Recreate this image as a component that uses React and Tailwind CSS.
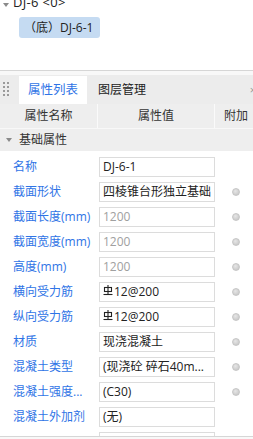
import React from "react";

const FONT = "font-['Open_Sans','Noto_Sans_CJK_SC',sans-serif]";

const rows = [
  { label: "名称", value: "DJ-6-1", dot: false },
  { label: "截面形状", value: "四棱锥台形独立基础", dot: true },
  { label: "截面长度(mm)", value: "1200", dot: true, muted: true },
  { label: "截面宽度(mm)", value: "1200", dot: true, muted: true },
  { label: "高度(mm)", value: "1200", dot: true, muted: true },
  { label: "横向受力筋", value: "12@200", dot: true, rebar: true },
  { label: "纵向受力筋", value: "12@200", dot: true, rebar: true },
  { label: "材质", value: "现浇混凝土", dot: true },
  { label: "混凝土类型", value: "(现浇砼 碎石40m...", dot: true },
  { label: "混凝土强度...", value: "(C30)", dot: true },
  { label: "混凝土外加剂", value: "(无)", dot: false },
];

const Rebar = () => (
  <svg width="10" height="11" viewBox="0 0 10 11" className="mr-[1px] -mt-[3px] shrink-0">
    <rect x="1.5" y="2.5" width="7" height="4" fill="none" stroke="#222" strokeWidth="1.1" />
    <line x1="5" y1="0" x2="5" y2="9.5" stroke="#222" strokeWidth="1.1" />
    <line x1="0.5" y1="9.5" x2="9.5" y2="9.5" stroke="#222" strokeWidth="1.1" />
  </svg>
);

const Caret = ({ className }) => (
  <svg width="6" height="4" viewBox="0 0 6 4" className={className}>
    <polygon points="0,0 6,0 3,4" fill="#8a8a8a" />
  </svg>
);

export default function App() {
  return (
    <div className={`w-[253px] h-[439px] overflow-hidden bg-white text-[12px] text-[#222] flex flex-col ${FONT}`}>
      {/* tree */}
      <div className="h-[70px] shrink-0 flex flex-col">
        <div className="flex items-center h-[16px] -mt-[6px] pl-[3px]">
          <Caret className="mr-[4px] mt-[5px]" />
          <span className="leading-[16px] text-[13px] tracking-[0.3px]">DJ-6 &lt;0&gt;</span>
        </div>
        <div className="mt-[7px] ml-[19px] w-[81px] h-[21px] rounded-[3px] bg-[#c5dbf2] flex items-center pl-[5px]">
          <span className="leading-[16px]">（底）DJ-6-1</span>
        </div>
      </div>

      {/* splitter */}
      <div className="h-[5px] shrink-0 border-t border-[#d6d6d6] bg-[#f8f8f8]" />

      {/* tabs */}
      <div className="h-[29px] shrink-0 bg-[#ececec] flex items-end relative">
        <div className="grid grid-cols-2 gap-x-[2px] gap-y-[2px] ml-[3px] mb-[8px] mr-[10px]">
          {Array.from({ length: 8 }).map((_, i) => (
            <span key={i} className="w-[2px] h-[2px] bg-[#9a9a9a]" />
          ))}
        </div>
        <div className="w-[68px] h-[28px] bg-white flex items-center justify-center text-[#2f74e6] text-[12.5px]">
          属性列表
        </div>
        <div className="ml-[11px] h-[28px] flex items-center text-[12px] text-[#222]">图层管理</div>
        <span className="absolute right-[-3px] top-[7px] text-[11px] text-[#9a9a9a]">×</span>
      </div>

      {/* header */}
      <div className="h-[25px] shrink-0 bg-[#eeeeee] flex border-b border-[#f8f8f8] text-[12px] text-[#333]">
        <div className="w-[98px] flex items-center justify-center border-r border-[#fafafa]">属性名称</div>
        <div className="w-[117px] flex items-center justify-center border-r border-[#fafafa]">属性值</div>
        <div className="flex-1 flex items-center pl-[9px]">附加</div>
      </div>

      {/* section */}
      <div className="h-[22px] shrink-0 bg-[#eeeeee] flex items-center pl-[6px] text-[12px] text-[#333]">
        <Caret className="mr-[7px]" />
        基础属性
      </div>

      {/* rows */}
      <div className="h-[285px] shrink-0 overflow-hidden pt-[6px] flex flex-col gap-[5px]">
        {[...rows, { label: "", value: "" }].map((r, i) => (
          <div key={i} className="flex items-center h-[20px] shrink-0">
            <div className="w-[99px] pl-[13px] text-[#2f74e6] whitespace-nowrap leading-[20px]">{r.label}</div>
            <div
              className={`w-[116px] h-[20px] border border-[#dcdcdc] flex items-center pl-[3px] whitespace-nowrap overflow-hidden ${
                r.muted ? "text-[#a0a0a0]" : "text-[#222]"
              }`}
            >
              {r.rebar && <Rebar />}
              {r.value}
            </div>
            <div className="flex-1 flex justify-center pl-[4px]">
              {r.dot && (
                <span className="w-[8px] h-[8px] rounded-full bg-[radial-gradient(circle_at_40%_35%,#e6e6e6,#c2c2c2)] border border-[#c6c6c6]" />
              )}
            </div>
          </div>
        ))}
      </div>

      {/* bottom edge */}
      <div className="flex-1 border-t border-[#d6d6d6] bg-[#f8f8f8]" />
    </div>
  );
}
